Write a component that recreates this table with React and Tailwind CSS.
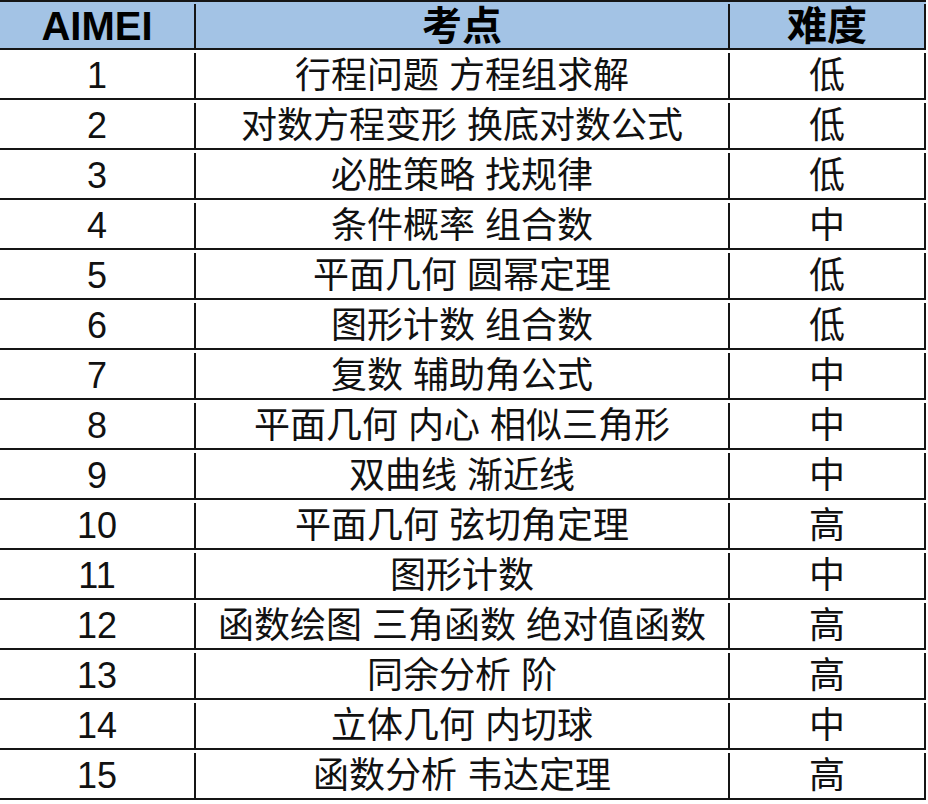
import React from 'react';

const rows = [
  ['1', '行程问题 方程组求解', '低'],
  ['2', '对数方程变形 换底对数公式', '低'],
  ['3', '必胜策略 找规律', '低'],
  ['4', '条件概率 组合数', '中'],
  ['5', '平面几何 圆幂定理', '低'],
  ['6', '图形计数 组合数', '低'],
  ['7', '复数 辅助角公式', '中'],
  ['8', '平面几何 内心 相似三角形', '中'],
  ['9', '双曲线 渐近线', '中'],
  ['10', '平面几何 弦切角定理', '高'],
  ['11', '图形计数', '中'],
  ['12', '函数绘图 三角函数 绝对值函数', '高'],
  ['13', '同余分析 阶', '高'],
  ['14', '立体几何 内切球', '中'],
  ['15', '函数分析 韦达定理', '高'],
];

const font = { fontFamily: '"Liberation Sans", Arial, "Noto Sans CJK SC", sans-serif' };

function Cell({ children, head }) {
  return (
    <div
      className={`flex items-center justify-center border-r-2 border-[#151515] whitespace-nowrap leading-none ${
        head ? 'text-[40px] font-bold text-black' : 'text-[36px] text-[#111]'
      }`}
    >
      {children}
    </div>
  );
}

export default function App() {
  return (
    <div className="w-[928px] h-[804px] bg-white overflow-hidden" style={font}>
      <div className="w-[926px]">
        {/* header */}
        <div className="grid grid-cols-[196px_534px_196px] h-[50px] border-t-2 border-b-2 border-[#151515] bg-[#a3c3e5] pt-[2px]">
          <Cell head>AIMEI</Cell>
          <Cell head>考点</Cell>
          <Cell head>难度</Cell>
        </div>

        {rows.map(([n, topic, level]) => (
          <div key={n} className="grid grid-cols-[196px_534px_196px] h-[50px] border-b-2 border-[#151515] pt-[3px]">
            <Cell>{n}</Cell>
            <Cell>{topic}</Cell>
            <Cell>{level}</Cell>
          </div>
        ))}
      </div>
    </div>
  );
}
